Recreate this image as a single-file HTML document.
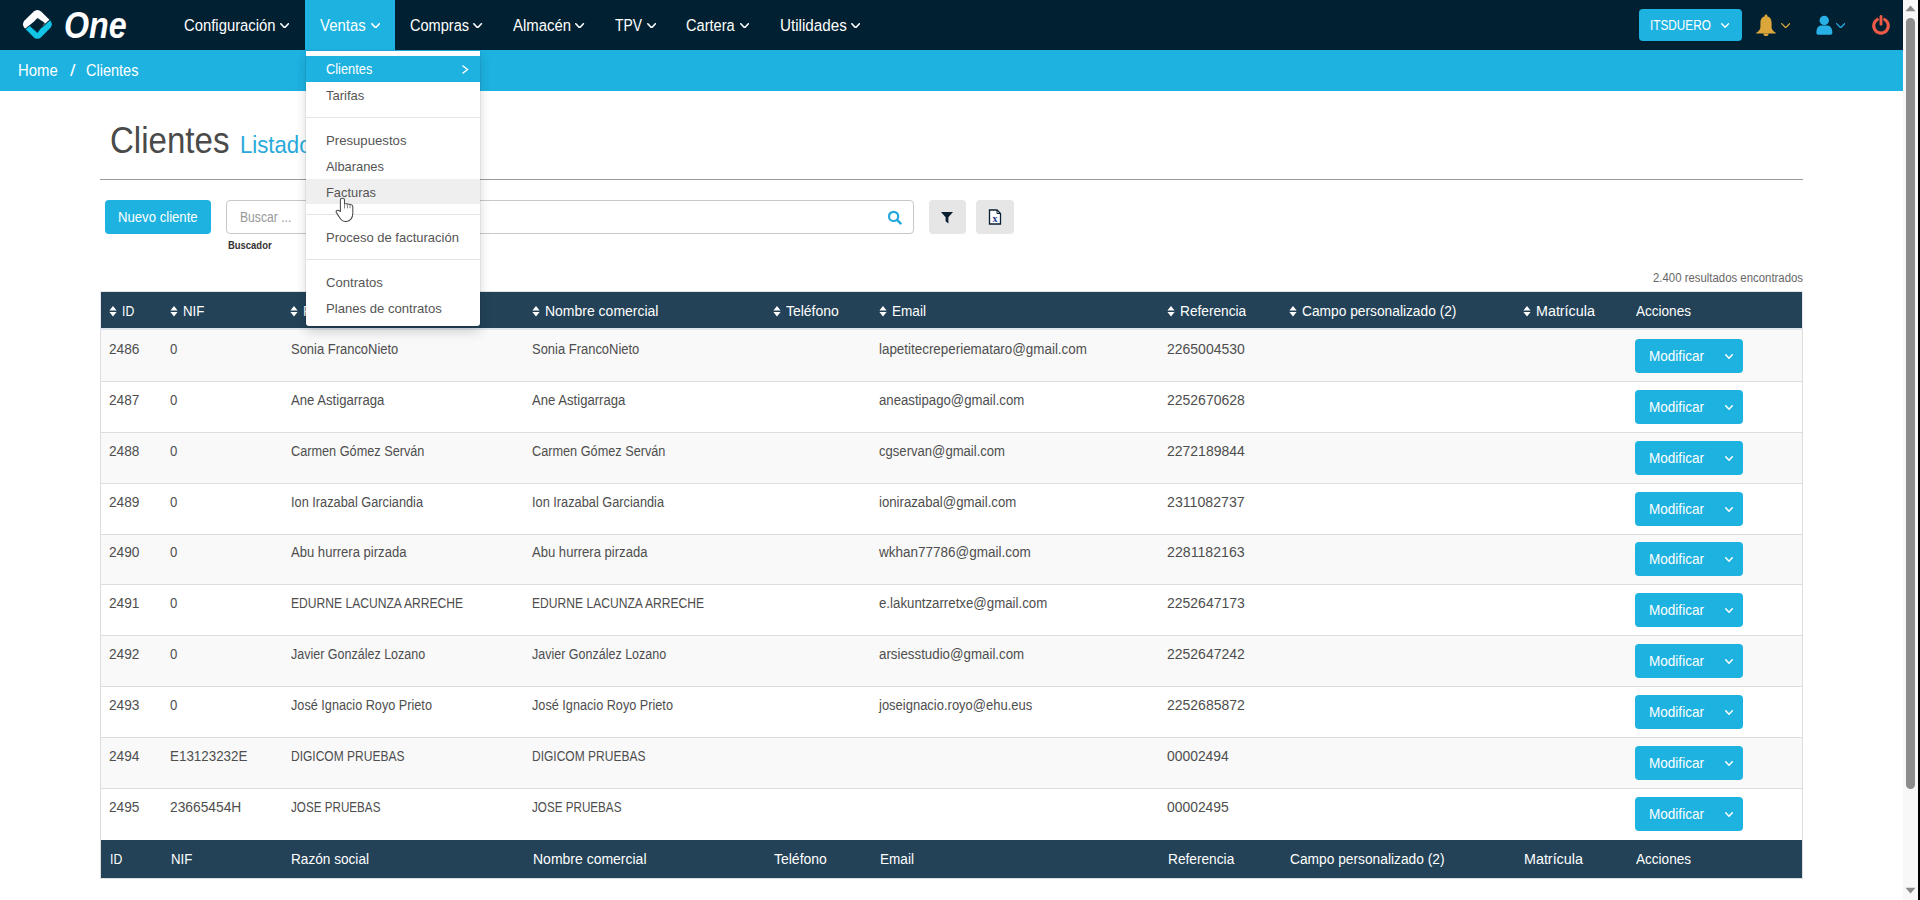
<!DOCTYPE html>
<html><head><meta charset="utf-8"><title>Clientes</title>
<style>
html,body{margin:0;padding:0;}
body{width:1920px;height:900px;overflow:hidden;position:relative;background:#fff;font-family:"Liberation Sans", sans-serif;}
.t{position:absolute;white-space:nowrap;line-height:1;}
.r{position:absolute;display:block;}
</style></head><body>
<div class="r" style="left:0px;top:0px;width:1903px;height:50px;background:#012133;"></div>
<svg class="r" style="left:18px;top:6px" width="40" height="38" viewBox="18 6 40 38">
<defs>
<clipPath id="cw"><polygon points="14,37.0 33,22.4 42,26.6 60,10.1 60,0 14,0"/></clipPath>
<clipPath id="cc"><polygon points="14,38.2 33,23.6 42,27.8 60,11.3 60,50 14,50"/></clipPath>
</defs>
<g clip-path="url(#cw)"><rect x="-11.7" y="-11.7" width="23.4" height="23.4" rx="5.2" fill="#fff" transform="translate(37.4 24.3) rotate(45)"/></g>
<g clip-path="url(#cc)"><rect x="-11.7" y="-11.7" width="23.4" height="23.4" rx="5.2" fill="#12C4E6" transform="translate(37.4 24.3) rotate(45)"/></g>
<polygon points="37.4,18.3 44.6,23 37.4,32.6 30,25.9" fill="#012133" stroke="#012133" stroke-width="0.6" stroke-linejoin="round"/>
</svg>
<div class="t " style="left:64.00px;top:8.003px;font-size:36.23px;color:#fff;font-weight:700;transform:scaleX(0.8897);transform-origin:0 0;font-style:italic;">One</div>
<div class="r" style="left:305px;top:0px;width:90px;height:50px;background:#1DB2E0;"></div>
<div class="t " style="left:184.40px;top:18.011px;font-size:16.67px;color:#fff;font-weight:400;transform:scaleX(0.8908);transform-origin:0 0;">Configuración</div>
<svg class="r" style="left:280.2px;top:22.6px" width="9.2" height="5.6" viewBox="0 0 9.2 5.6"><polyline points="0.8,0.8 4.6,4.8 8.399999999999999,0.8" fill="none" stroke="#fff" stroke-width="1.6" stroke-linecap="round" stroke-linejoin="round"/></svg>
<div class="t " style="left:320.30px;top:18.011px;font-size:16.67px;color:#fff;font-weight:400;transform:scaleX(0.8961);transform-origin:0 0;">Ventas</div>
<svg class="r" style="left:371px;top:22.6px" width="9.2" height="5.6" viewBox="0 0 9.2 5.6"><polyline points="0.8,0.8 4.6,4.8 8.399999999999999,0.8" fill="none" stroke="#fff" stroke-width="1.6" stroke-linecap="round" stroke-linejoin="round"/></svg>
<div class="t " style="left:410.40px;top:18.011px;font-size:16.67px;color:#fff;font-weight:400;transform:scaleX(0.8745);transform-origin:0 0;">Compras</div>
<svg class="r" style="left:473.4px;top:22.6px" width="9.2" height="5.6" viewBox="0 0 9.2 5.6"><polyline points="0.8,0.8 4.6,4.8 8.399999999999999,0.8" fill="none" stroke="#fff" stroke-width="1.6" stroke-linecap="round" stroke-linejoin="round"/></svg>
<div class="t " style="left:513.25px;top:18.011px;font-size:16.67px;color:#fff;font-weight:400;transform:scaleX(0.8946);transform-origin:0 0;">Almacén</div>
<svg class="r" style="left:575.4px;top:22.6px" width="9.2" height="5.6" viewBox="0 0 9.2 5.6"><polyline points="0.8,0.8 4.6,4.8 8.399999999999999,0.8" fill="none" stroke="#fff" stroke-width="1.6" stroke-linecap="round" stroke-linejoin="round"/></svg>
<div class="t " style="left:615.00px;top:18.011px;font-size:16.67px;color:#fff;font-weight:400;transform:scaleX(0.8329);transform-origin:0 0;">TPV</div>
<svg class="r" style="left:646.9px;top:22.6px" width="9.2" height="5.6" viewBox="0 0 9.2 5.6"><polyline points="0.8,0.8 4.6,4.8 8.399999999999999,0.8" fill="none" stroke="#fff" stroke-width="1.6" stroke-linecap="round" stroke-linejoin="round"/></svg>
<div class="t " style="left:686.25px;top:18.011px;font-size:16.67px;color:#fff;font-weight:400;transform:scaleX(0.8757);transform-origin:0 0;">Cartera</div>
<svg class="r" style="left:740px;top:22.6px" width="9.2" height="5.6" viewBox="0 0 9.2 5.6"><polyline points="0.8,0.8 4.6,4.8 8.399999999999999,0.8" fill="none" stroke="#fff" stroke-width="1.6" stroke-linecap="round" stroke-linejoin="round"/></svg>
<div class="t " style="left:779.50px;top:18.011px;font-size:16.67px;color:#fff;font-weight:400;transform:scaleX(0.9123);transform-origin:0 0;">Utilidades</div>
<svg class="r" style="left:850.5px;top:22.6px" width="9.2" height="5.6" viewBox="0 0 9.2 5.6"><polyline points="0.8,0.8 4.6,4.8 8.399999999999999,0.8" fill="none" stroke="#fff" stroke-width="1.6" stroke-linecap="round" stroke-linejoin="round"/></svg>
<div class="r" style="left:1639px;top:9px;width:103px;height:32px;background:#1DB2E0;border-radius:4px;"></div>
<div class="t " style="left:1650.40px;top:19.002px;font-size:13.91px;color:#fff;font-weight:400;transform:scaleX(0.8475);transform-origin:0 0;">ITSDUERO</div>
<svg class="r" style="left:1721px;top:22.5px" width="8.3" height="5" viewBox="0 0 8.3 5"><polyline points="0.7,0.7 4.15,4.3 7.6000000000000005,0.7" fill="none" stroke="#fff" stroke-width="1.4" stroke-linecap="round" stroke-linejoin="round"/></svg>
<svg class="r" style="left:1755px;top:14px" width="22" height="23" viewBox="0 0 22 23">
<circle cx="11" cy="1.9" r="1.4" fill="#DCA73A"/>
<path d="M11 2.2C7.4 2.2 5.4 4.8 5.4 9V13.2C5.4 15.6 3.6 17.2 1.2 18.8V19.6H20.8V18.8C18.4 17.2 16.6 15.6 16.6 13.2V9C16.6 4.8 14.6 2.2 11 2.2Z" fill="#DCA73A"/>
<path d="M8.4 19.4A2.6 2.6 0 0 0 13.6 19.4Z" fill="#DCA73A"/></svg>
<svg class="r" style="left:1780.7px;top:22.8px" width="9.3" height="5.4" viewBox="0 0 9.3 5.4"><polyline points="0.65,0.65 4.65,4.75 8.65,0.65" fill="none" stroke="#DCA73A" stroke-width="1.3" stroke-linecap="round" stroke-linejoin="round"/></svg>
<svg class="r" style="left:1815px;top:15px" width="19" height="21" viewBox="0 0 19 21">
<circle cx="9.25" cy="5.5" r="4.7" fill="#27B1E6"/>
<path d="M1.4 17.2C1.4 12.8 3.6 10.4 6.4 10.4H12.1C14.9 10.4 17.3 12.8 17.3 17.2V18C17.3 19.1 16.5 19.7 15.4 19.7H3.3C2.2 19.7 1.4 19.1 1.4 18Z" fill="#27B1E6"/></svg>
<svg class="r" style="left:1836px;top:22.8px" width="9.3" height="5.4" viewBox="0 0 9.3 5.4"><polyline points="0.65,0.65 4.65,4.75 8.65,0.65" fill="none" stroke="#27B1E6" stroke-width="1.3" stroke-linecap="round" stroke-linejoin="round"/></svg>
<svg class="r" style="left:1871px;top:14px" width="20" height="22" viewBox="0 0 20 22">
<path d="M6.35 5.48A7.3 7.3 0 1 0 13.65 5.48" fill="none" stroke="#EE5A45" stroke-width="3.1" stroke-linecap="round"/>
<line x1="10" y1="2.5" x2="10" y2="10.2" stroke="#EE5A45" stroke-width="2.9" stroke-linecap="round"/></svg>
<div class="r" style="left:0px;top:50px;width:1903px;height:41px;background:#1DB2E0;"></div>
<div class="t " style="left:18.30px;top:63.012px;font-size:15.94px;color:#fff;font-weight:400;transform:scaleX(0.9327);transform-origin:0 0;">Home</div>
<div class="t " style="left:70.00px;top:63.012px;font-size:15.94px;color:#fff;font-weight:400;transform:scaleX(1.2321);transform-origin:0 0;">/</div>
<div class="t " style="left:85.50px;top:63.012px;font-size:15.94px;color:#fff;font-weight:400;transform:scaleX(0.9110);transform-origin:0 0;">Clientes</div>
<div class="t " style="left:110.00px;top:122.007px;font-size:37.83px;color:#4a4a4a;font-weight:400;transform:scaleX(0.8739);transform-origin:0 0;">Clientes</div>
<div class="t " style="left:240.40px;top:133.009px;font-size:24.20px;color:#29A9DA;font-weight:400;transform:scaleX(0.9173);transform-origin:0 0;">Listado</div>
<div class="r" style="left:100px;top:179px;width:1703px;height:1px;background:#9a9a9a;"></div>
<div class="r" style="left:105px;top:200px;width:106px;height:34px;background:#1DB2E0;border-radius:4px;"></div>
<div class="t " style="left:118.30px;top:210.005px;font-size:14.64px;color:#fff;font-weight:400;transform:scaleX(0.8985);transform-origin:0 0;">Nuevo cliente</div>
<div class="r" style="left:226px;top:200px;width:688px;height:34px;background:#fff;border:1px solid #c8c8c8;border-radius:4px;box-sizing:border-box;"></div>
<div class="t " style="left:239.60px;top:211.011px;font-size:13.91px;color:#999;font-weight:400;transform:scaleX(0.8744);transform-origin:0 0;">Buscar ...</div>
<svg class="r" style="left:887px;top:210px" width="16" height="15" viewBox="0 0 16 15">
<circle cx="6.6" cy="6.4" r="4.6" fill="none" stroke="#25A8DA" stroke-width="2.2"/><line x1="10" y1="9.8" x2="13.6" y2="13.4" stroke="#25A8DA" stroke-width="2.4" stroke-linecap="round"/></svg>
<div class="t " style="left:228.30px;top:240.009px;font-size:10.72px;color:#333;font-weight:700;transform:scaleX(0.8819);transform-origin:0 0;">Buscador</div>
<div class="r" style="left:929px;top:200px;width:37px;height:34px;background:#e6e6e6;border-radius:4px;"></div>
<svg class="r" style="left:940px;top:211px" width="14" height="13" viewBox="0 0 14 13">
<path d="M1 1h12l-4.6 5.2v6.3L5.6 10.2V6.2z" fill="#0b1f33"/></svg>
<div class="r" style="left:976px;top:200px;width:38px;height:34px;background:#e6e6e6;border-radius:4px;"></div>
<svg class="r" style="left:988px;top:209px" width="14" height="16" viewBox="0 0 14 16">
<path d="M1.5 1h7.5l3.5 3.5V15H1.5z" fill="#fff" stroke="#0b1f33" stroke-width="1.3"/><path d="M9 1v3.5h3.5" fill="none" stroke="#0b1f33" stroke-width="1"/>
<text x="7" y="13" font-family="Liberation Serif" font-size="10" font-weight="700" text-anchor="middle" fill="#223a8a">x</text></svg>
<div class="t " style="left:1652.50px;top:272.001px;font-size:12.61px;color:#666;font-weight:400;transform:scaleX(0.9030);transform-origin:0 0;">2.400 resultados encontrados</div>
<div class="r" style="left:100px;top:291px;width:1703px;height:1px;background:#e3e7ec;"></div>
<div class="r" style="left:100px;top:291px;width:1px;height:38px;background:#e3e7ec;"></div>
<div class="r" style="left:1802px;top:291px;width:1px;height:38px;background:#e3e7ec;"></div>
<div class="r" style="left:101px;top:292px;width:1701px;height:36px;background:#234257;"></div>
<div class="r" style="left:100px;top:328px;width:1703px;height:2px;background:#dfe5ec;"></div>
<svg class="r" style="left:108.5px;top:306.2px" width="8" height="11" viewBox="0 0 8 11"><path d="M4 0.1L7.6 4.5H0.4z M4 10.5L7.6 6.1H0.4z" fill="#fff"/></svg>
<div class="t " style="left:121.70px;top:303.005px;font-size:15.36px;color:#fff;font-weight:400;transform:scaleX(0.7942);transform-origin:0 0;">ID</div>
<svg class="r" style="left:169.5px;top:306.2px" width="8" height="11" viewBox="0 0 8 11"><path d="M4 0.1L7.6 4.5H0.4z M4 10.5L7.6 6.1H0.4z" fill="#fff"/></svg>
<div class="t " style="left:182.70px;top:303.005px;font-size:15.36px;color:#fff;font-weight:400;transform:scaleX(0.8612);transform-origin:0 0;">NIF</div>
<svg class="r" style="left:290.0px;top:306.2px" width="8" height="11" viewBox="0 0 8 11"><path d="M4 0.1L7.6 4.5H0.4z M4 10.5L7.6 6.1H0.4z" fill="#fff"/></svg>
<div class="t " style="left:303.20px;top:303.005px;font-size:15.36px;color:#fff;font-weight:400;transform:scaleX(0.8869);transform-origin:0 0;">Razón social</div>
<svg class="r" style="left:531.5px;top:306.2px" width="8" height="11" viewBox="0 0 8 11"><path d="M4 0.1L7.6 4.5H0.4z M4 10.5L7.6 6.1H0.4z" fill="#fff"/></svg>
<div class="t " style="left:544.70px;top:303.005px;font-size:15.36px;color:#fff;font-weight:400;transform:scaleX(0.9104);transform-origin:0 0;">Nombre comercial</div>
<svg class="r" style="left:772.5px;top:306.2px" width="8" height="11" viewBox="0 0 8 11"><path d="M4 0.1L7.6 4.5H0.4z M4 10.5L7.6 6.1H0.4z" fill="#fff"/></svg>
<div class="t " style="left:785.70px;top:303.005px;font-size:15.36px;color:#fff;font-weight:400;transform:scaleX(0.9093);transform-origin:0 0;">Teléfono</div>
<svg class="r" style="left:878.5px;top:306.2px" width="8" height="11" viewBox="0 0 8 11"><path d="M4 0.1L7.6 4.5H0.4z M4 10.5L7.6 6.1H0.4z" fill="#fff"/></svg>
<div class="t " style="left:891.70px;top:303.005px;font-size:15.36px;color:#fff;font-weight:400;transform:scaleX(0.8827);transform-origin:0 0;">Email</div>
<svg class="r" style="left:1166.5px;top:306.2px" width="8" height="11" viewBox="0 0 8 11"><path d="M4 0.1L7.6 4.5H0.4z M4 10.5L7.6 6.1H0.4z" fill="#fff"/></svg>
<div class="t " style="left:1179.70px;top:303.005px;font-size:15.36px;color:#fff;font-weight:400;transform:scaleX(0.8917);transform-origin:0 0;">Referencia</div>
<svg class="r" style="left:1288.5px;top:306.2px" width="8" height="11" viewBox="0 0 8 11"><path d="M4 0.1L7.6 4.5H0.4z M4 10.5L7.6 6.1H0.4z" fill="#fff"/></svg>
<div class="t " style="left:1301.70px;top:303.005px;font-size:15.36px;color:#fff;font-weight:400;transform:scaleX(0.8956);transform-origin:0 0;">Campo personalizado (2)</div>
<svg class="r" style="left:1522.5px;top:306.2px" width="8" height="11" viewBox="0 0 8 11"><path d="M4 0.1L7.6 4.5H0.4z M4 10.5L7.6 6.1H0.4z" fill="#fff"/></svg>
<div class="t " style="left:1535.70px;top:303.005px;font-size:15.36px;color:#fff;font-weight:400;transform:scaleX(0.9317);transform-origin:0 0;">Matrícula</div>
<div class="t " style="left:1635.80px;top:303.005px;font-size:15.36px;color:#fff;font-weight:400;transform:scaleX(0.8818);transform-origin:0 0;">Acciones</div>
<div class="r" style="left:100px;top:330px;width:1px;height:510px;background:#dddddd;"></div>
<div class="r" style="left:1802px;top:330px;width:1px;height:510px;background:#dddddd;"></div>
<div class="r" style="left:101px;top:330px;width:1701px;height:51px;background:#f9f9f9;"></div>
<div class="r" style="left:101px;top:433px;width:1701px;height:50px;background:#f9f9f9;"></div>
<div class="r" style="left:101px;top:535px;width:1701px;height:49px;background:#f9f9f9;"></div>
<div class="r" style="left:101px;top:636px;width:1701px;height:50px;background:#f9f9f9;"></div>
<div class="r" style="left:101px;top:738px;width:1701px;height:50px;background:#f9f9f9;"></div>
<div class="r" style="left:101px;top:381px;width:1701px;height:1px;background:#dddddd;"></div>
<div class="r" style="left:101px;top:432px;width:1701px;height:1px;background:#dddddd;"></div>
<div class="r" style="left:101px;top:483px;width:1701px;height:1px;background:#dddddd;"></div>
<div class="r" style="left:101px;top:534px;width:1701px;height:1px;background:#dddddd;"></div>
<div class="r" style="left:101px;top:584px;width:1701px;height:1px;background:#dddddd;"></div>
<div class="r" style="left:101px;top:635px;width:1701px;height:1px;background:#dddddd;"></div>
<div class="r" style="left:101px;top:686px;width:1701px;height:1px;background:#dddddd;"></div>
<div class="r" style="left:101px;top:737px;width:1701px;height:1px;background:#dddddd;"></div>
<div class="r" style="left:101px;top:788px;width:1701px;height:1px;background:#dddddd;"></div>
<div class="t " style="left:109.00px;top:342.009px;font-size:14.49px;color:#4e4e4e;font-weight:400;transform:scaleX(0.9458);transform-origin:0 0;">2486</div>
<div class="t " style="left:170.00px;top:342.009px;font-size:14.49px;color:#4e4e4e;font-weight:400;transform:scaleX(0.9076);transform-origin:0 0;">0</div>
<div class="t " style="left:290.50px;top:342.009px;font-size:14.49px;color:#4e4e4e;font-weight:400;transform:scaleX(0.8945);transform-origin:0 0;">Sonia FrancoNieto</div>
<div class="t " style="left:532.00px;top:342.009px;font-size:14.49px;color:#4e4e4e;font-weight:400;transform:scaleX(0.8945);transform-origin:0 0;">Sonia FrancoNieto</div>
<div class="t " style="left:879.00px;top:342.009px;font-size:14.49px;color:#4e4e4e;font-weight:400;transform:scaleX(0.9247);transform-origin:0 0;">lapetitecreperiemataro@gmail.com</div>
<div class="t " style="left:1167.00px;top:342.009px;font-size:14.49px;color:#4e4e4e;font-weight:400;transform:scaleX(0.9655);transform-origin:0 0;">2265004530</div>
<div class="r" style="left:1635px;top:339px;width:108px;height:34px;background:#1DB2E0;border-radius:4px;"></div>
<div class="t " style="left:1648.70px;top:349.006px;font-size:14.20px;color:#fff;font-weight:400;transform:scaleX(0.9550);transform-origin:0 0;">Modificar</div>
<svg class="r" style="left:1725.3px;top:353.6px" width="8" height="5" viewBox="0 0 8 5"><polyline points="0.75,0.75 4.0,4.25 7.25,0.75" fill="none" stroke="#fff" stroke-width="1.5" stroke-linecap="round" stroke-linejoin="round"/></svg>
<div class="t " style="left:109.00px;top:393.009px;font-size:14.49px;color:#4e4e4e;font-weight:400;transform:scaleX(0.9458);transform-origin:0 0;">2487</div>
<div class="t " style="left:170.00px;top:393.009px;font-size:14.49px;color:#4e4e4e;font-weight:400;transform:scaleX(0.9076);transform-origin:0 0;">0</div>
<div class="t " style="left:290.50px;top:393.009px;font-size:14.49px;color:#4e4e4e;font-weight:400;transform:scaleX(0.9061);transform-origin:0 0;">Ane Astigarraga</div>
<div class="t " style="left:532.00px;top:393.009px;font-size:14.49px;color:#4e4e4e;font-weight:400;transform:scaleX(0.9061);transform-origin:0 0;">Ane Astigarraga</div>
<div class="t " style="left:879.00px;top:393.009px;font-size:14.49px;color:#4e4e4e;font-weight:400;transform:scaleX(0.9098);transform-origin:0 0;">aneastipago@gmail.com</div>
<div class="t " style="left:1167.00px;top:393.009px;font-size:14.49px;color:#4e4e4e;font-weight:400;transform:scaleX(0.9655);transform-origin:0 0;">2252670628</div>
<div class="r" style="left:1635px;top:390px;width:108px;height:34px;background:#1DB2E0;border-radius:4px;"></div>
<div class="t " style="left:1648.70px;top:400.006px;font-size:14.20px;color:#fff;font-weight:400;transform:scaleX(0.9550);transform-origin:0 0;">Modificar</div>
<svg class="r" style="left:1725.3px;top:404.6px" width="8" height="5" viewBox="0 0 8 5"><polyline points="0.75,0.75 4.0,4.25 7.25,0.75" fill="none" stroke="#fff" stroke-width="1.5" stroke-linecap="round" stroke-linejoin="round"/></svg>
<div class="t " style="left:109.00px;top:444.009px;font-size:14.49px;color:#4e4e4e;font-weight:400;transform:scaleX(0.9458);transform-origin:0 0;">2488</div>
<div class="t " style="left:170.00px;top:444.009px;font-size:14.49px;color:#4e4e4e;font-weight:400;transform:scaleX(0.9076);transform-origin:0 0;">0</div>
<div class="t " style="left:290.50px;top:444.009px;font-size:14.49px;color:#4e4e4e;font-weight:400;transform:scaleX(0.8769);transform-origin:0 0;">Carmen Gómez Serván</div>
<div class="t " style="left:532.00px;top:444.009px;font-size:14.49px;color:#4e4e4e;font-weight:400;transform:scaleX(0.8769);transform-origin:0 0;">Carmen Gómez Serván</div>
<div class="t " style="left:879.00px;top:444.009px;font-size:14.49px;color:#4e4e4e;font-weight:400;transform:scaleX(0.9035);transform-origin:0 0;">cgservan@gmail.com</div>
<div class="t " style="left:1167.00px;top:444.009px;font-size:14.49px;color:#4e4e4e;font-weight:400;transform:scaleX(0.9655);transform-origin:0 0;">2272189844</div>
<div class="r" style="left:1635px;top:441px;width:108px;height:34px;background:#1DB2E0;border-radius:4px;"></div>
<div class="t " style="left:1648.70px;top:451.006px;font-size:14.20px;color:#fff;font-weight:400;transform:scaleX(0.9550);transform-origin:0 0;">Modificar</div>
<svg class="r" style="left:1725.3px;top:455.6px" width="8" height="5" viewBox="0 0 8 5"><polyline points="0.75,0.75 4.0,4.25 7.25,0.75" fill="none" stroke="#fff" stroke-width="1.5" stroke-linecap="round" stroke-linejoin="round"/></svg>
<div class="t " style="left:109.00px;top:495.009px;font-size:14.49px;color:#4e4e4e;font-weight:400;transform:scaleX(0.9458);transform-origin:0 0;">2489</div>
<div class="t " style="left:170.00px;top:495.009px;font-size:14.49px;color:#4e4e4e;font-weight:400;transform:scaleX(0.9076);transform-origin:0 0;">0</div>
<div class="t " style="left:290.50px;top:495.009px;font-size:14.49px;color:#4e4e4e;font-weight:400;transform:scaleX(0.8818);transform-origin:0 0;">Ion Irazabal Garciandia</div>
<div class="t " style="left:532.00px;top:495.009px;font-size:14.49px;color:#4e4e4e;font-weight:400;transform:scaleX(0.8818);transform-origin:0 0;">Ion Irazabal Garciandia</div>
<div class="t " style="left:879.00px;top:495.009px;font-size:14.49px;color:#4e4e4e;font-weight:400;transform:scaleX(0.9101);transform-origin:0 0;">ionirazabal@gmail.com</div>
<div class="t " style="left:1167.00px;top:495.009px;font-size:14.49px;color:#4e4e4e;font-weight:400;transform:scaleX(0.9778);transform-origin:0 0;">2311082737</div>
<div class="r" style="left:1635px;top:492px;width:108px;height:34px;background:#1DB2E0;border-radius:4px;"></div>
<div class="t " style="left:1648.70px;top:502.006px;font-size:14.20px;color:#fff;font-weight:400;transform:scaleX(0.9550);transform-origin:0 0;">Modificar</div>
<svg class="r" style="left:1725.3px;top:506.6px" width="8" height="5" viewBox="0 0 8 5"><polyline points="0.75,0.75 4.0,4.25 7.25,0.75" fill="none" stroke="#fff" stroke-width="1.5" stroke-linecap="round" stroke-linejoin="round"/></svg>
<div class="t " style="left:109.00px;top:545.009px;font-size:14.49px;color:#4e4e4e;font-weight:400;transform:scaleX(0.9458);transform-origin:0 0;">2490</div>
<div class="t " style="left:170.00px;top:545.009px;font-size:14.49px;color:#4e4e4e;font-weight:400;transform:scaleX(0.9076);transform-origin:0 0;">0</div>
<div class="t " style="left:290.50px;top:545.009px;font-size:14.49px;color:#4e4e4e;font-weight:400;transform:scaleX(0.9018);transform-origin:0 0;">Abu hurrera pirzada</div>
<div class="t " style="left:532.00px;top:545.009px;font-size:14.49px;color:#4e4e4e;font-weight:400;transform:scaleX(0.9018);transform-origin:0 0;">Abu hurrera pirzada</div>
<div class="t " style="left:879.07px;top:545.009px;font-size:14.49px;color:#4e4e4e;font-weight:400;transform:scaleX(0.9323);transform-origin:0 0;">wkhan77786@gmail.com</div>
<div class="t " style="left:1167.00px;top:545.009px;font-size:14.49px;color:#4e4e4e;font-weight:400;transform:scaleX(0.9778);transform-origin:0 0;">2281182163</div>
<div class="r" style="left:1635px;top:542px;width:108px;height:34px;background:#1DB2E0;border-radius:4px;"></div>
<div class="t " style="left:1648.70px;top:552.006px;font-size:14.20px;color:#fff;font-weight:400;transform:scaleX(0.9550);transform-origin:0 0;">Modificar</div>
<svg class="r" style="left:1725.3px;top:556.6px" width="8" height="5" viewBox="0 0 8 5"><polyline points="0.75,0.75 4.0,4.25 7.25,0.75" fill="none" stroke="#fff" stroke-width="1.5" stroke-linecap="round" stroke-linejoin="round"/></svg>
<div class="t " style="left:109.00px;top:596.009px;font-size:14.49px;color:#4e4e4e;font-weight:400;transform:scaleX(0.9458);transform-origin:0 0;">2491</div>
<div class="t " style="left:170.00px;top:596.009px;font-size:14.49px;color:#4e4e4e;font-weight:400;transform:scaleX(0.9076);transform-origin:0 0;">0</div>
<div class="t " style="left:290.50px;top:596.009px;font-size:14.49px;color:#4e4e4e;font-weight:400;transform:scaleX(0.8353);transform-origin:0 0;">EDURNE LACUNZA ARRECHE</div>
<div class="t " style="left:532.00px;top:596.009px;font-size:14.49px;color:#4e4e4e;font-weight:400;transform:scaleX(0.8353);transform-origin:0 0;">EDURNE LACUNZA ARRECHE</div>
<div class="t " style="left:879.00px;top:596.009px;font-size:14.49px;color:#4e4e4e;font-weight:400;transform:scaleX(0.9155);transform-origin:0 0;">e.lakuntzarretxe@gmail.com</div>
<div class="t " style="left:1167.00px;top:596.009px;font-size:14.49px;color:#4e4e4e;font-weight:400;transform:scaleX(0.9655);transform-origin:0 0;">2252647173</div>
<div class="r" style="left:1635px;top:593px;width:108px;height:34px;background:#1DB2E0;border-radius:4px;"></div>
<div class="t " style="left:1648.70px;top:603.006px;font-size:14.20px;color:#fff;font-weight:400;transform:scaleX(0.9550);transform-origin:0 0;">Modificar</div>
<svg class="r" style="left:1725.3px;top:607.6px" width="8" height="5" viewBox="0 0 8 5"><polyline points="0.75,0.75 4.0,4.25 7.25,0.75" fill="none" stroke="#fff" stroke-width="1.5" stroke-linecap="round" stroke-linejoin="round"/></svg>
<div class="t " style="left:109.00px;top:647.009px;font-size:14.49px;color:#4e4e4e;font-weight:400;transform:scaleX(0.9458);transform-origin:0 0;">2492</div>
<div class="t " style="left:170.00px;top:647.009px;font-size:14.49px;color:#4e4e4e;font-weight:400;transform:scaleX(0.9076);transform-origin:0 0;">0</div>
<div class="t " style="left:290.50px;top:647.009px;font-size:14.49px;color:#4e4e4e;font-weight:400;transform:scaleX(0.8636);transform-origin:0 0;">Javier González Lozano</div>
<div class="t " style="left:532.00px;top:647.009px;font-size:14.49px;color:#4e4e4e;font-weight:400;transform:scaleX(0.8636);transform-origin:0 0;">Javier González Lozano</div>
<div class="t " style="left:879.00px;top:647.009px;font-size:14.49px;color:#4e4e4e;font-weight:400;transform:scaleX(0.9189);transform-origin:0 0;">arsiesstudio@gmail.com</div>
<div class="t " style="left:1167.00px;top:647.009px;font-size:14.49px;color:#4e4e4e;font-weight:400;transform:scaleX(0.9655);transform-origin:0 0;">2252647242</div>
<div class="r" style="left:1635px;top:644px;width:108px;height:34px;background:#1DB2E0;border-radius:4px;"></div>
<div class="t " style="left:1648.70px;top:654.006px;font-size:14.20px;color:#fff;font-weight:400;transform:scaleX(0.9550);transform-origin:0 0;">Modificar</div>
<svg class="r" style="left:1725.3px;top:658.6px" width="8" height="5" viewBox="0 0 8 5"><polyline points="0.75,0.75 4.0,4.25 7.25,0.75" fill="none" stroke="#fff" stroke-width="1.5" stroke-linecap="round" stroke-linejoin="round"/></svg>
<div class="t " style="left:109.00px;top:698.009px;font-size:14.49px;color:#4e4e4e;font-weight:400;transform:scaleX(0.9458);transform-origin:0 0;">2493</div>
<div class="t " style="left:170.00px;top:698.009px;font-size:14.49px;color:#4e4e4e;font-weight:400;transform:scaleX(0.9076);transform-origin:0 0;">0</div>
<div class="t " style="left:290.50px;top:698.009px;font-size:14.49px;color:#4e4e4e;font-weight:400;transform:scaleX(0.8753);transform-origin:0 0;">José Ignacio Royo Prieto</div>
<div class="t " style="left:532.00px;top:698.009px;font-size:14.49px;color:#4e4e4e;font-weight:400;transform:scaleX(0.8753);transform-origin:0 0;">José Ignacio Royo Prieto</div>
<div class="t " style="left:879.32px;top:698.009px;font-size:14.49px;color:#4e4e4e;font-weight:400;transform:scaleX(0.8963);transform-origin:0 0;">joseignacio.royo@ehu.eus</div>
<div class="t " style="left:1167.00px;top:698.009px;font-size:14.49px;color:#4e4e4e;font-weight:400;transform:scaleX(0.9655);transform-origin:0 0;">2252685872</div>
<div class="r" style="left:1635px;top:695px;width:108px;height:34px;background:#1DB2E0;border-radius:4px;"></div>
<div class="t " style="left:1648.70px;top:705.006px;font-size:14.20px;color:#fff;font-weight:400;transform:scaleX(0.9550);transform-origin:0 0;">Modificar</div>
<svg class="r" style="left:1725.3px;top:709.6px" width="8" height="5" viewBox="0 0 8 5"><polyline points="0.75,0.75 4.0,4.25 7.25,0.75" fill="none" stroke="#fff" stroke-width="1.5" stroke-linecap="round" stroke-linejoin="round"/></svg>
<div class="t " style="left:109.00px;top:749.009px;font-size:14.49px;color:#4e4e4e;font-weight:400;transform:scaleX(0.9458);transform-origin:0 0;">2494</div>
<div class="t " style="left:170.00px;top:749.009px;font-size:14.49px;color:#4e4e4e;font-weight:400;transform:scaleX(0.9244);transform-origin:0 0;">E13123232E</div>
<div class="t " style="left:290.50px;top:749.009px;font-size:14.49px;color:#4e4e4e;font-weight:400;transform:scaleX(0.8292);transform-origin:0 0;">DIGICOM PRUEBAS</div>
<div class="t " style="left:532.00px;top:749.009px;font-size:14.49px;color:#4e4e4e;font-weight:400;transform:scaleX(0.8292);transform-origin:0 0;">DIGICOM PRUEBAS</div>
<div class="t " style="left:1167.00px;top:749.009px;font-size:14.49px;color:#4e4e4e;font-weight:400;transform:scaleX(0.9582);transform-origin:0 0;">00002494</div>
<div class="r" style="left:1635px;top:746px;width:108px;height:34px;background:#1DB2E0;border-radius:4px;"></div>
<div class="t " style="left:1648.70px;top:756.006px;font-size:14.20px;color:#fff;font-weight:400;transform:scaleX(0.9550);transform-origin:0 0;">Modificar</div>
<svg class="r" style="left:1725.3px;top:760.6px" width="8" height="5" viewBox="0 0 8 5"><polyline points="0.75,0.75 4.0,4.25 7.25,0.75" fill="none" stroke="#fff" stroke-width="1.5" stroke-linecap="round" stroke-linejoin="round"/></svg>
<div class="t " style="left:109.00px;top:800.009px;font-size:14.49px;color:#4e4e4e;font-weight:400;transform:scaleX(0.9458);transform-origin:0 0;">2495</div>
<div class="t " style="left:170.00px;top:800.009px;font-size:14.49px;color:#4e4e4e;font-weight:400;transform:scaleX(0.9516);transform-origin:0 0;">23665454H</div>
<div class="t " style="left:290.50px;top:800.009px;font-size:14.49px;color:#4e4e4e;font-weight:400;transform:scaleX(0.8051);transform-origin:0 0;">JOSE PRUEBAS</div>
<div class="t " style="left:532.00px;top:800.009px;font-size:14.49px;color:#4e4e4e;font-weight:400;transform:scaleX(0.8051);transform-origin:0 0;">JOSE PRUEBAS</div>
<div class="t " style="left:1167.00px;top:800.009px;font-size:14.49px;color:#4e4e4e;font-weight:400;transform:scaleX(0.9582);transform-origin:0 0;">00002495</div>
<div class="r" style="left:1635px;top:797px;width:108px;height:34px;background:#1DB2E0;border-radius:4px;"></div>
<div class="t " style="left:1648.70px;top:807.006px;font-size:14.20px;color:#fff;font-weight:400;transform:scaleX(0.9550);transform-origin:0 0;">Modificar</div>
<svg class="r" style="left:1725.3px;top:811.6px" width="8" height="5" viewBox="0 0 8 5"><polyline points="0.75,0.75 4.0,4.25 7.25,0.75" fill="none" stroke="#fff" stroke-width="1.5" stroke-linecap="round" stroke-linejoin="round"/></svg>
<div class="r" style="left:101px;top:840px;width:1701px;height:38px;background:#234257;"></div>
<div class="r" style="left:100px;top:840px;width:1px;height:39px;background:#dddddd;"></div>
<div class="r" style="left:1802px;top:840px;width:1px;height:39px;background:#dddddd;"></div>
<div class="r" style="left:100px;top:878px;width:1703px;height:1px;background:#dddddd;"></div>
<div class="t " style="left:109.50px;top:851.006px;font-size:15.22px;color:#fff;font-weight:400;transform:scaleX(0.8017);transform-origin:0 0;">ID</div>
<div class="t " style="left:170.50px;top:851.006px;font-size:15.22px;color:#fff;font-weight:400;transform:scaleX(0.8694);transform-origin:0 0;">NIF</div>
<div class="t " style="left:291.00px;top:851.006px;font-size:15.22px;color:#fff;font-weight:400;transform:scaleX(0.8953);transform-origin:0 0;">Razón social</div>
<div class="t " style="left:532.50px;top:851.006px;font-size:15.22px;color:#fff;font-weight:400;transform:scaleX(0.9191);transform-origin:0 0;">Nombre comercial</div>
<div class="t " style="left:773.50px;top:851.006px;font-size:15.22px;color:#fff;font-weight:400;transform:scaleX(0.9179);transform-origin:0 0;">Teléfono</div>
<div class="t " style="left:879.50px;top:851.006px;font-size:15.22px;color:#fff;font-weight:400;transform:scaleX(0.8911);transform-origin:0 0;">Email</div>
<div class="t " style="left:1167.50px;top:851.006px;font-size:15.22px;color:#fff;font-weight:400;transform:scaleX(0.9002);transform-origin:0 0;">Referencia</div>
<div class="t " style="left:1289.50px;top:851.006px;font-size:15.22px;color:#fff;font-weight:400;transform:scaleX(0.9041);transform-origin:0 0;">Campo personalizado (2)</div>
<div class="t " style="left:1523.50px;top:851.006px;font-size:15.22px;color:#fff;font-weight:400;transform:scaleX(0.9406);transform-origin:0 0;">Matrícula</div>
<div class="t " style="left:1635.50px;top:851.006px;font-size:15.22px;color:#fff;font-weight:400;transform:scaleX(0.8902);transform-origin:0 0;">Acciones</div>
<div class="r" style="left:306px;top:51px;width:174px;height:275px;background:#fff;border-radius:0 0 3px 3px;box-shadow:0 6px 12px rgba(0,0,0,.16), 0 0 0 1px rgba(0,0,0,.05);"></div>
<div class="r" style="left:306px;top:56.4px;width:174px;height:25.4px;background:#1DB2E0;"></div>
<div class="t " style="left:326.00px;top:63.005px;font-size:13.91px;color:#fff;font-weight:400;transform:scaleX(0.9225);transform-origin:0 0;">Clientes</div>
<svg class="r" style="left:462px;top:65px" width="7" height="9" viewBox="0 0 7 9"><polyline points="1,1 5.6,4.5 1,8" fill="none" stroke="#fff" stroke-width="1.5" stroke-linecap="round" stroke-linejoin="round"/></svg>
<div class="t " style="left:326.00px;top:89.001px;font-size:13.33px;color:#555;font-weight:400;transform:scaleX(0.9779);transform-origin:0 0;">Tarifas</div>
<div class="r" style="left:306px;top:117px;width:174px;height:1px;background:#e5e5e5;"></div>
<div class="t " style="left:326.00px;top:134.001px;font-size:13.33px;color:#555;font-weight:400;transform:scaleX(0.9873);transform-origin:0 0;">Presupuestos</div>
<div class="t " style="left:326.00px;top:160.001px;font-size:13.33px;color:#555;font-weight:400;transform:scaleX(0.9656);transform-origin:0 0;">Albaranes</div>
<div class="r" style="left:306px;top:179.3px;width:174px;height:25.2px;background:#efefef;"></div>
<div class="t " style="left:326.00px;top:186.004px;font-size:13.33px;color:#555;font-weight:400;transform:scaleX(0.9640);transform-origin:0 0;">Facturas</div>
<div class="r" style="left:306px;top:214px;width:174px;height:1px;background:#e5e5e5;"></div>
<div class="t " style="left:326.00px;top:231.014px;font-size:13.33px;color:#555;font-weight:400;transform:scaleX(0.9751);transform-origin:0 0;">Proceso de facturación</div>
<div class="r" style="left:306px;top:259px;width:174px;height:1px;background:#e5e5e5;"></div>
<div class="t " style="left:326.00px;top:276.014px;font-size:13.33px;color:#555;font-weight:400;transform:scaleX(0.9844);transform-origin:0 0;">Contratos</div>
<div class="t " style="left:326.00px;top:302.001px;font-size:13.33px;color:#555;font-weight:400;transform:scaleX(0.9825);transform-origin:0 0;">Planes de contratos</div>
<svg class="r" style="left:335px;top:197px" width="20" height="26" viewBox="0 0 20 26">
<path d="M5.4 14.5V2.8C5.4 1.8 6.3 1.2 7.45 1.2C8.6 1.2 9.5 1.8 9.5 2.8V6.6L15.8 7.6C17 7.8 17.8 8.6 17.8 9.8V16.5C17.8 21 15 24.4 11.5 24.4H10C8 24.4 6.8 23.5 5.6 22L1.4 15.6C0.9 14.8 1.1 13.9 1.8 13.5C2.6 13 3.5 13.2 4.1 13.8Z" fill="#fff" stroke="#4a4a4a" stroke-width="1.05" stroke-linejoin="round"/>
<path d="M9.5 7V11.5M12.4 7.2V11.3M15 7.6V11.2" stroke="#777" stroke-width="0.9"/></svg>
<div class="r" style="left:1903px;top:0px;width:17px;height:900px;background:#f8f8f8;"></div>
<div class="r" style="left:1918px;top:0px;width:2px;height:900px;background:#000;"></div>
<svg class="r" style="left:1905px;top:5px" width="11" height="7" viewBox="0 0 11 7"><path d="M5.5 0.5L10.5 6.2H0.5z" fill="#8a8a8a"/></svg>
<div class="r" style="left:1906px;top:18px;width:9px;height:771px;background:#8c8c8c;border-radius:5px;"></div>
<svg class="r" style="left:1905px;top:887px" width="11" height="7" viewBox="0 0 11 7"><path d="M5.5 6.5L10.5 0.8H0.5z" fill="#8a8a8a"/></svg>
</body></html>
